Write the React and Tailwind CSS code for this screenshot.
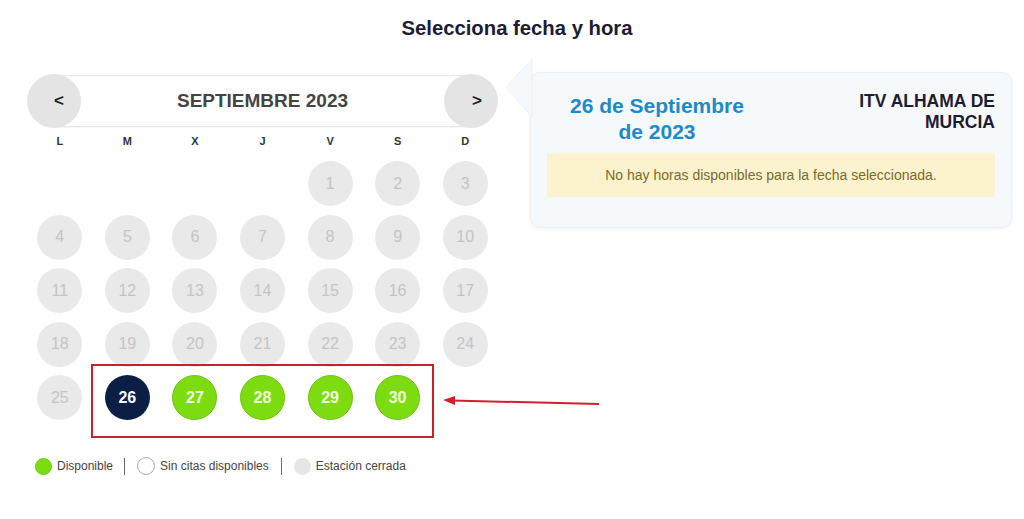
import React from "react";

const days = [
  null, null, null, null, 1, 2, 3,
  4, 5, 6, 7, 8, 9, 10,
  11, 12, 13, 14, 15, 16, 17,
  18, 19, 20, 21, 22, 23, 24,
  25, 26, 27, 28, 29, 30,
];

const weekDays = ["L", "M", "X", "J", "V", "S", "D"];

function DayCircle({ day }) {
  if (day === null) return <div className="h-[45px]" />;
  // selected day
  if (day === 26) {
    return (
      <div className="flex justify-center">
        <div className="w-[45px] h-[45px] rounded-full bg-[#0b1f45] flex items-center justify-center text-white text-[16px] font-bold">
          {day}
        </div>
      </div>
    );
  }
  // available days
  if (day > 26) {
    return (
      <div className="flex justify-center">
        <div className="w-[45px] h-[45px] rounded-full bg-[#7ddc0f] border border-[#6cc40c] flex items-center justify-center text-[#f1ffe0] text-[16px] font-bold">
          {day}
        </div>
      </div>
    );
  }
  // closed days
  return (
    <div className="flex justify-center">
      <div className="w-[45px] h-[45px] rounded-full bg-[#e9e9e9] flex items-center justify-center text-[#c4c4c4] text-[16px]">
        {day}
      </div>
    </div>
  );
}

export default function App() {
  return (
    <div
      className="relative w-[1024px] h-[519px] bg-white overflow-hidden"
      style={{ fontFamily: '"Liberation Sans", Arial, sans-serif' }}
    >
      {/* Title */}
      <h1 className="pt-[16px] pl-[10px] text-center text-[20.3px] leading-[24px] font-bold text-[#1c1c32]">
        Selecciona fecha y hora
      </h1>

      <div className="flex items-start mt-[34px]">
        {/* Calendar */}
        <div className="relative ml-[27px] w-[471px]">
          {/* Month header */}
          <div className="relative h-[54px] flex items-center justify-between">
            <div className="absolute left-[20px] right-[20px] top-[1px] bottom-[1px] border border-[#e6e6e6] rounded-[6px] bg-white shadow-[0_1px_2px_rgba(0,0,0,0.04)]" />
            <button className="relative z-10 w-[54px] h-[54px] rounded-full bg-[#e4e4e4] flex items-center justify-center pl-[10px] text-[17px] font-bold text-[#222]">
              &lt;
            </button>
            <div className="relative z-10 text-[19px] font-bold text-[#444]">
              SEPTIEMBRE 2023
            </div>
            <button className="relative z-10 w-[54px] h-[54px] rounded-full bg-[#e4e4e4] flex items-center justify-center pl-[12px] text-[17px] font-bold text-[#222]">
              &gt;
            </button>
          </div>

          {/* Week days */}
          <div className="grid grid-cols-7 mt-[5px] -mx-[1px]">
            {weekDays.map((d) => (
              <div key={d} className="text-center text-[11px] leading-[16px] font-bold text-[#333]">
                {d}
              </div>
            ))}
          </div>

          {/* Days */}
          <div className="grid grid-cols-7 gap-y-[8.5px] mt-[12px] -mx-[1px]">
            {days.map((d, i) => (
              <DayCircle key={i} day={d} />
            ))}
          </div>

          {/* Highlight box */}
          <div className="absolute left-[64px] top-[290px] w-[343px] h-[74px] border-2 border-[#c8202c]" />

          {/* Legend */}
          <div className="flex items-center mt-[37px] pl-[8px] text-[12px] text-[#444]">
            <span className="w-[17px] h-[17px] rounded-full bg-[#7ddc0f] border border-[#6cc40c]" />
            <span className="ml-[5px]">Disponible</span>
            <span className="ml-[11px] w-px h-[17px] bg-[#666]" />
            <span className="ml-[12px] w-[18px] h-[18px] rounded-full bg-white border border-[#aaa]" />
            <span className="ml-[5px]">Sin citas disponibles</span>
            <span className="ml-[12px] w-px h-[17px] bg-[#666]" />
            <span className="ml-[12px] w-[17px] h-[17px] rounded-full bg-[#e6e6e6]" />
            <span className="ml-[5px]">Estación cerrada</span>
          </div>
        </div>

        {/* Selected date card */}
        <div className="relative ml-[32px] -mt-[2px] w-[482px] rounded-[10px] bg-[#f6f9fb] border border-[#eef1f4] shadow-[0_1px_4px_rgba(0,0,0,0.06)] px-[16px] pt-[20px] pb-[30px]">
          <svg
            className="absolute -left-[26px] -top-[14px]"
            width="28"
            height="60"
            viewBox="0 0 28 60"
          >
            <polygon points="27,0 1,28 27,58" fill="#f6f9fb" stroke="#eef1f4" />
          </svg>
          <div className="flex items-start">
            <div className="ml-[15px] w-[190px] text-center text-[21px] leading-[26px] font-bold text-[#1d8ac8]">
              26 de Septiembre de 2023
            </div>
            <div className="ml-auto w-[190px] text-right text-[17.5px] leading-[21px] font-bold text-[#1c1c32] -mt-[2px]">
              ITV ALHAMA DE MURCIA
            </div>
          </div>
          <div className="mt-[8px] h-[44px] bg-[#fcf2cd] flex items-center justify-center text-[14px] text-[#7c6a2e]">
            No hay horas disponibles para la fecha seleccionada.
          </div>
        </div>
      </div>

      {/* Arrow annotation */}
      <svg className="absolute left-0 top-0" width="1024" height="519">
        <line x1="599" y1="404" x2="452" y2="400.5" stroke="#d0202c" strokeWidth="2" />
        <polygon points="443,400 455,396 455,405" fill="#d0202c" />
      </svg>
    </div>
  );
}
